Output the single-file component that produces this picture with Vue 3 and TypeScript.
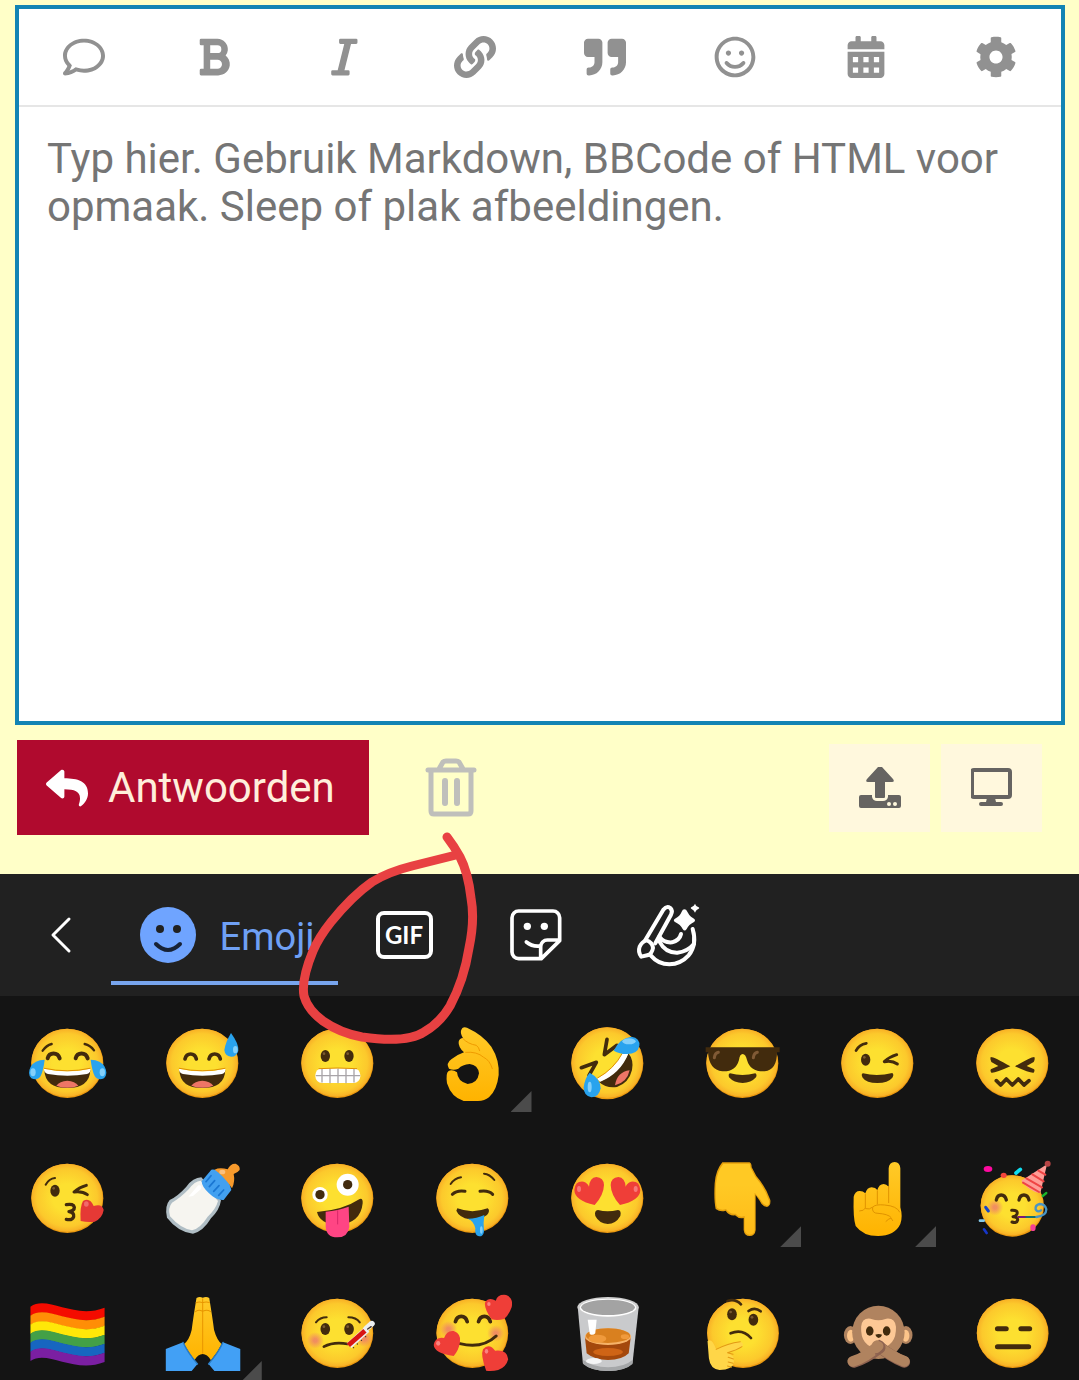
<script setup lang="ts">
import { ref } from 'vue'

interface Tool {
  label: string
  box: string
  path: string
}

interface Emoji {
  name: string
  box: string
  art: string
  variants?: boolean
}

const message = ref('')

const tools: Tool[] = [
  { label: 'Reactie', box: '0 0 512 512', path: 'M256 32C114.6 32 0 125.1 0 240c0 47.6 19.9 91.2 52.9 126.3C38 405.7 7 439.1 6.5 439.5c-6.6 7-8.4 17.2-4.6 26S14.4 480 24 480c61.5 0 110-25.7 139.1-46.3C192 442.8 223.2 448 256 448c141.4 0 256-93.1 256-208S397.4 32 256 32zm0 368c-26.7 0-53.1-4.1-78.4-12.1l-22.7-7.2-19.5 13.8c-14.3 10.1-33.9 21.4-57.5 29 7.3-12.1 14.4-25.7 19.9-40.2l10.6-28.1-20.6-21.8C69.7 314.1 48 282.2 48 240c0-88.2 93.3-160 208-160s208 71.8 208 160-93.3 160-208 160z' },
  { label: 'Vet', box: '-64 0 512 512', path: 'M333.49 238a122 122 0 0 0 27-65.21C367.87 96.49 308 32 233.42 32H34a16 16 0 0 0-16 16v48a16 16 0 0 0 16 16h31.87v288H34a16 16 0 0 0-16 16v48a16 16 0 0 0 16 16h209.32c70.8 0 134.14-51.75 141-122.4 4.74-48.45-16.39-92.06-50.83-119.6zM145.66 112h87.76a48 48 0 0 1 0 96h-87.76zm87.76 288h-87.76V288h87.76a56 56 0 0 1 0 112z' },
  { label: 'Cursief', box: '-88 0 512 512', path: 'M320 48v32a16 16 0 0 1-16 16h-62.76l-80 320H208a16 16 0 0 1 16 16v32a16 16 0 0 1-16 16H16a16 16 0 0 1-16-16v-32a16 16 0 0 1 16-16h62.76l80-320H112a16 16 0 0 1-16-16V48a16 16 0 0 1 16-16h192a16 16 0 0 1 16 16z' },
  { label: 'Link', box: '0 0 512 512', path: 'M326.612 185.391c59.747 59.809 58.927 155.698.36 214.59-.11.12-.24.25-.36.37l-67.2 67.2c-59.27 59.27-155.699 59.262-214.96 0-59.27-59.26-59.27-155.7 0-214.96l37.106-37.106c9.84-9.84 26.786-3.3 27.294 10.606.648 17.722 3.826 35.527 9.69 52.721 1.986 5.822.567 12.262-3.783 16.612l-13.087 13.087c-28.026 28.026-28.905 73.66-1.155 101.96 28.024 28.579 74.086 28.749 102.325.51l67.2-67.19c28.191-28.191 28.073-73.757 0-101.83-3.701-3.694-7.429-6.564-10.341-8.569a16.037 16.037 0 0 1-6.947-12.606c-.396-10.567 3.348-21.456 11.698-29.806l21.054-21.055c5.521-5.521 14.182-6.199 20.584-1.731a152.482 152.482 0 0 1 20.522 17.197zM467.547 44.449c-59.261-59.262-155.69-59.27-214.96 0l-67.2 67.2c-.12.12-.25.25-.36.37-58.566 58.892-59.387 154.781.36 214.59a152.454 152.454 0 0 0 20.521 17.196c6.402 4.468 15.064 3.789 20.584-1.731l21.054-21.055c8.35-8.35 12.094-19.239 11.698-29.806a16.037 16.037 0 0 0-6.947-12.606c-2.912-2.005-6.64-4.875-10.341-8.569-28.073-28.073-28.191-73.639 0-101.83l67.2-67.19c28.239-28.239 74.3-28.069 102.325.51 27.75 28.3 26.872 73.934-1.155 101.96l-13.087 13.087c-4.35 4.35-5.769 10.79-3.783 16.612 5.864 17.194 9.042 34.999 9.69 52.721.509 13.906 17.454 20.446 27.294 10.606l37.106-37.106c59.271-59.259 59.271-155.699.001-214.959z' },
  { label: 'Citaat', box: '0 0 512 512', path: 'M464 32H336c-26.5 0-48 21.5-48 48v128c0 26.5 21.5 48 48 48h80v64c0 35.3-28.7 64-64 64h-8c-13.3 0-24 10.7-24 24v48c0 13.3 10.7 24 24 24h8c88.4 0 160-71.6 160-160V80c0-26.5-21.5-48-48-48zm-288 0H48C21.5 32 0 53.5 0 80v128c0 26.5 21.5 48 48 48h80v64c0 35.3-28.7 64-64 64h-8c-13.3 0-24 10.7-24 24v48c0 13.3 10.7 24 24 24h8c88.4 0 160-71.6 160-160V80c0-26.5-21.5-48-48-48z' },
  { label: 'Smiley', box: '-8 0 512 512', path: 'M248 8C111 8 0 119 0 256s111 248 248 248 248-111 248-248S385 8 248 8zm0 448c-110.3 0-200-89.7-200-200S137.7 56 248 56s200 89.7 200 200-89.7 200-200 200zm-80-216c17.7 0 32-14.3 32-32s-14.3-32-32-32-32 14.3-32 32 14.3 32 32 32zm160 0c17.7 0 32-14.3 32-32s-14.3-32-32-32-32 14.3-32 32 14.3 32 32 32zm4 72.6c-20.8 25-51.5 39.4-84 39.4s-63.2-14.3-84-39.4c-8.5-10.2-23.7-11.5-33.8-3.1-10.2 8.5-11.5 23.6-3.1 33.8 30 36 74.1 56.6 120.9 56.6s90.9-20.6 120.9-56.6c8.5-10.2 7.1-25.3-3.1-33.8-10.1-8.4-25.3-7.1-33.8 3.1z' },
  { label: 'Datum', box: '-32 0 512 512', path: 'M0 464c0 26.5 21.5 48 48 48h352c26.5 0 48-21.5 48-48V192H0zM64 256h64v64H64zm128 0h64v64h-64zm128 0h64v64h-64zM64 384h64v64H64zm128 0h64v64h-64zm128 0h64v64h-64zM400 64h-48V16c0-8.8-7.2-16-16-16h-32c-8.8 0-16 7.2-16 16v48H160V16c0-8.8-7.2-16-16-16h-32c-8.8 0-16 7.2-16 16v48H48C21.5 64 0 85.5 0 112v48h448v-48c0-26.5-21.5-48-48-48z' },
  { label: 'Instellingen', box: '0 0 512 512', path: 'M487.4 315.7l-42.6-24.6c4.3-23.2 4.3-47 0-70.2l42.6-24.6c4.9-2.8 7.1-8.6 5.5-14-11.1-35.6-30-67.8-54.7-94.6-3.8-4.1-10-5.1-14.8-2.3L380.8 110c-17.9-15.4-38.5-27.3-60.8-35.1V25.8c0-5.6-3.9-10.5-9.4-11.7-36.7-8.2-74.3-7.8-109.2 0-5.5 1.2-9.4 6.1-9.4 11.7V75c-22.2 7.9-42.8 19.8-60.8 35.1L88.7 85.5c-4.9-2.8-11-1.9-14.8 2.3-24.7 26.7-43.6 58.9-54.7 94.6-1.7 5.4.6 11.2 5.5 14L67.3 221c-4.3 23.2-4.3 47 0 70.2l-42.6 24.6c-4.9 2.8-7.1 8.6-5.5 14 11.1 35.6 30 67.8 54.7 94.6 3.8 4.1 10 5.1 14.8 2.3l42.6-24.6c17.9 15.4 38.5 27.3 60.8 35.1v49.2c0 5.6 3.9 10.5 9.4 11.7 36.7 8.2 74.3 7.8 109.2 0 5.5-1.2 9.4-6.1 9.4-11.7v-49.2c22.2-7.9 42.8-19.8 60.8-35.1l42.6 24.6c4.9 2.8 11 1.9 14.8-2.3 24.7-26.7 43.6-58.9 54.7-94.6 1.5-5.5-.7-11.3-5.6-14.1zM256 336c-44.1 0-80-35.9-80-80s35.9-80 80-80 80 35.9 80 80-35.9 80-80 80z' },
]

const INK = '#422b0d'
const WATER = '#29a3ee'
const SHINE = '#83d0fb'
const EDGE = '#e08f00'
const HEART = '#ef3e38'

const fill = (d: string, color = INK) => `<path d="${d}" fill="${color}"/>`
const line = (d: string, width: number, color = INK) =>
  `<path d="${d}" fill="none" stroke="${color}" stroke-width="${width}" stroke-linecap="round" stroke-linejoin="round"/>`
const oval = (cx: number, cy: number, rx: number, ry: number, color = INK) =>
  `<ellipse cx="${cx}" cy="${cy}" rx="${rx}" ry="${ry}" fill="${color}"/>`
const head = (cx: number, cy: number, rx = 108, ry = 104) =>
  oval(cx, cy, rx, ry, '#eb9a10') + oval(cx - 1, cy - 2, rx - 1, ry - 2, 'url(#skin-face)')
const eye = (cx: number, cy: number) => oval(cx, cy, 14, 18) + oval(cx - 4, cy - 7, 4, 4, '#7a5a30')
const blush = (cx: number, cy: number) => oval(cx, cy, 25, 25, 'url(#blush)')
const shift = (dx: number, art: string) => `<g transform="translate(${dx} 0)">${art}</g>`
const mirror = (axis: number, art: string) => `<g transform="translate(${axis * 2} 0) scale(-1 1)">${art}</g>`

const laugh =
  fill('M134 180Q203 196 272 180Q270 234 203 234Q136 234 134 180') +
  fill('M170 227Q180 213 203 212Q226 213 236 227Q203 240 170 227', '#ee7566') +
  fill('M133 176Q203 192 272 176Q274 187 262 192Q203 202 145 192Q132 187 133 176', '#fff') +
  line('M134 175Q203 190 271 175', 3, EDGE)
const sideTear = fill('M135 149Q104 150 93 170Q82 192 95 205Q113 213 123 198Q131 182 135 149', WATER) + oval(100, 187, 8, 12, SHINE)
const loveEye = fill('M165 585Q105 572 104 540Q106 512 132 515Q144 519 148 530Q150 503 170 501Q192 503 193 525Q192 556 165 585', HEART) + oval(118, 537, 6, 9, '#f87878')
const sleeve = fill('M482 207L532 187Q545 218 574 252L557 273H482Z', '#42a0f5') + line('M532 187Q545 218 574 252', 4, '#2a7cc4')

const stripes = ['#f40b00', '#ff8e06', '#ffe708', '#43a047', '#1766c0', '#7b1fa2']
const flag = stripes
  .map((color, i) => {
    const y = 79 + i * 27
    return fill(`M90 ${y}C140 ${y - 36} 215 ${y + 40} 305 ${y + 3}V${y + 31}C215 ${y + 68} 140 ${y - 8} 90 ${y + 28}Z`, color)
  })
  .join('')

const emojis: Emoji[] = [
  {
    name: 'Tranen van het lachen',
    box: '82 42 240 240',
    art: head(203, 160) + line('M129 122Q140 106 156 102', 7) + line('M255 102Q272 106 283 121', 7) +
      line('M144 145C149 126 174 126 180 145', 12) + line('M228 145C233 126 258 126 264 145', 12) +
      laugh + sideTear + mirror(204, sideTear),
  },
  {
    name: 'Lachen met zweetdruppel',
    box: '487 42 240 240',
    art: head(608, 160) + line('M556 147C561 127 585 127 590 147', 11) + line('M628 147C633 127 657 127 662 147', 11) +
      shift(405, laugh) + fill('M694 69Q718 102 716 122Q710 141 694 140Q676 138 674 120Q677 98 694 69', WATER) + oval(707, 119, 7, 11, SHINE),
  },
  {
    name: 'Grimas',
    box: '82 42 240 240',
    art: head(203, 160) + eye(167, 138) + eye(238, 138) +
      '<rect x="137" y="175" width="135" height="44" rx="20" fill="#fff"/>' +
      line('M140 197H270M157 178V216M181 177V218M205 177V218M229 177V218M253 178V216', 4, '#a8a4a8') +
      line('M148 176Q203 172 261 176', 3, EDGE),
  },
  {
    name: 'OK-gebaar',
    box: '487 42 240 240',
    variants: true,
    art: fill('M574 62Q578 48 592 53Q640 75 665 110Q690 150 687 195Q682 240 658 262Q645 273 625 273H582Q545 262 532 220Q528 190 536 184Q547 177 562 187Q564 215 594 222Q624 220 628 190Q625 165 600 162Q578 164 566 176Q552 182 538 176Q528 160 545 148Q560 135 583 127Q565 110 567 95Q570 84 580 84Q572 70 574 62Z', 'url(#skin-hand)') +
      line('M580 86Q595 102 620 106Q628 112 630 122M588 127Q622 124 642 142Q660 150 668 176', 3, '#f09b00'),
  },
  {
    name: 'Rollend van het lachen',
    box: '82 42 240 240',
    art: head(203, 160, 108, 108) +
      fill('M266 130Q283 150 277 180Q268 218 232 231Q200 236 178 216Q240 190 266 130') +
      fill('M270 181Q232 186 226 226Q262 218 270 181', '#ee7566') +
      fill('M250 127L266 131Q242 190 182 215L172 206Q226 176 250 127', '#fff') + line('M248 130Q222 178 174 204', 3, EDGE) +
      line('M202 88L194 134L232 106', 11) + line('M125 173L170 157L148 196', 11) +
      fill('M222 122Q240 84 275 80Q302 84 299 108Q294 132 262 132Q240 132 222 122', WATER) + oval(268, 94, 20, 9, SHINE) +
      fill('M150 188Q182 205 183 235Q178 262 155 262Q132 258 132 232Q135 205 150 188', WATER) + oval(150, 231, 6, 16, SHINE),
  },
  {
    name: 'Zonnebril',
    box: '487 42 240 240',
    art: head(608, 160) +
      fill('M498 112H720V127H712Q712 180 675 184Q632 186 622 150Q618 132 609 132Q600 132 598 150Q588 186 548 184Q508 180 505 127H498Z') +
      line('M524 143Q526 129 536 127', 9, '#805a35') + line('M641 143Q643 129 653 127', 9, '#805a35') +
      fill('M571 190Q608 200 647 190Q653 194 649 202Q634 219 609 219Q583 219 568 202Q565 192 571 190'),
  },
  {
    name: 'Knipoog',
    box: '82 42 240 240',
    art: head(203, 160) + line('M139 122Q148 104 170 100', 8) + eye(168, 149) +
      line('M261 134Q240 140 224 155Q247 150 263 162', 9) +
      fill('M160 190Q203 200 248 189Q254 194 248 203Q235 219 203 219Q170 219 159 203Q153 192 160 190'),
  },
  {
    name: 'Verward',
    box: '487 42 240 240',
    art: head(608, 160) + fill('M543 141Q552 140 602 169Q556 190 545 188Q540 180 545 177L566 168L545 156Q540 148 543 141') +
      fill('M674 141Q665 140 616 169Q661 190 672 188Q677 180 672 177L651 168L672 156Q677 148 674 141') +
      line('M560 212L573 225L590 207L608 225L626 207L643 225L658 212', 11),
  },
  {
    name: 'Kushandje',
    box: '82 447 240 240',
    art: head(203, 565) + line('M138 524Q148 506 166 504', 6) + eye(166, 542) +
      line('M260 526Q238 532 223 546Q247 542 263 554', 9) +
      line('M200 584Q222 580 224 592Q224 603 208 605Q224 607 222 620Q218 632 200 628', 10) +
      fill('M243 633Q240 590 250 573Q270 560 282 588Q308 580 312 600Q308 625 285 635Q265 638 243 633', '#e53935') + oval(260, 582, 7, 8, '#f06b6b'),
  },
  {
    name: 'Zuigfles',
    box: '487 447 240 240',
    art: fill('M605 502L664 571Q660 600 634 625Q610 665 580 671Q535 666 502 623Q494 588 510 570Q535 558 560 530Q580 503 605 502', '#b0bec5') +
      fill('M603 512L655 573Q649 597 624 620Q602 655 577 661Q543 656 511 619Q504 593 517 578Q542 564 567 538Q585 513 603 512', '#f6f5f0') +
      fill('M566 560L596 526Q608 524 604 537L580 558Z', '#fff') +
      fill('M606 514L635 479Q650 476 668 494Q692 518 695 540L672 570Q650 572 628 550Q606 530 606 514', '#42a0f0') +
      line('M619 515L634 497M629 530L645 512M642 544L658 527M657 556L672 540', 5, '#1976d2') +
      fill('M645 479Q660 471 684 478Q692 460 708 461Q722 467 720 480Q714 488 702 492Q707 515 697 535Q672 497 645 479', '#f79a2c') +
      oval(668, 486, 9, 7, '#fdc07c'),
  },
  {
    name: 'Gek gezicht',
    box: '82 447 240 240',
    art: head(203, 565) + oval(151, 554, 23, 23, '#fff') + oval(151, 554, 14, 14) + oval(234, 524, 33, 33, '#fff') + oval(234, 524, 14, 14) +
      fill('M142 606Q220 600 270 567Q280 563 279 580Q273 640 205 645Q150 642 142 606') +
      fill('M168 605Q205 602 237 590L239 650Q235 682 203 682Q170 682 168 650Z', '#ff4584') + line('M204 602V642', 3, '#d82668'),
  },
  {
    name: 'Kwijlend gezicht',
    box: '487 447 240 240',
    art: head(608, 565) + line('M543 522Q555 505 574 502', 6) + line('M643 491Q660 492 674 510', 6) +
      line('M548 553Q562 540 586 544', 9) + line('M631 544Q656 540 669 553', 9) +
      fill('M563 595Q608 612 654 595Q663 602 652 615Q630 630 600 628Q568 622 560 602Z') +
      fill('M594 626Q622 626 644 615Q640 640 643 665Q640 680 628 679Q614 676 617 655Q612 632 594 626', WATER) + oval(635, 660, 4, 11, SHINE),
  },
  {
    name: 'Hartjesogen',
    box: '82 447 240 240',
    art: head(203, 565) + loveEye + mirror(203, loveEye) +
      fill('M175 600Q203 608 235 600Q246 602 242 618Q228 642 204 642Q178 640 167 618Q163 601 175 600'),
  },
  {
    name: 'Wijst omlaag',
    box: '487 447 240 240',
    variants: true,
    art: fill('M548 457H630Q636 460 636 472L650 498Q678 530 692 570Q694 588 682 591Q668 590 660 572L648 555V660Q646 678 630 678Q614 678 612 660V624Q598 628 586 616Q568 618 558 602Q543 608 528 597Q522 570 525 520Q528 480 548 457', '#e5a00c') +
      fill('M551 461H630L633 474L647 501Q676 535 688 572Q690 585 682 587Q670 584 663 570L645 548V660Q643 674 630 674Q617 674 615 658V618Q598 624 588 611Q570 613 559 597Q545 602 532 594Q526 570 529 521Q532 484 551 461', 'url(#skin-point)'),
  },
  {
    name: 'Wijst omhoog',
    box: '82 447 240 240',
    variants: true,
    art: fill('M237 530V475Q238 457 255 456Q271 457 272 475V592Q280 620 272 642Q255 678 205 678Q160 678 138 648Q130 625 132 560Q136 543 150 543Q160 543 167 550Q172 532 186 532Q198 533 203 540Q208 522 222 522Q230 523 237 530Z', 'url(#skin-hand)') +
      line('M167 552V594Q163 603 150 603M203 542V582M237 530V578M168 596Q180 600 188 592M270 606Q262 588 225 585Q196 582 189 592Q186 610 205 610Q235 612 244 622M229 634Q236 627 244 624L249 632', 3, '#e09300'),
  },
  {
    name: 'Feestgezicht',
    box: '487 447 240 240',
    art: head(608, 588, 95, 92) + blush(556, 592) + line('M560 570C564 550 585 550 590 570', 10) + line('M628 570C632 550 653 550 658 570', 10) +
      line('M606 601Q626 600 622 612Q619 619 610 620Q625 621 624 630Q621 641 607 636', 9) +
      line('M626 621H650', 6, '#7b1a78') + line('M650 621H680', 6, '#18706f') +
      line('M680 621Q710 618 710 598Q706 582 690 582Q676 585 678 598Q684 608 694 601', 7, '#4995c5') +
      fill('M635 512L712 463L692 550Q660 545 635 512', '#ff9c96') +
      line('M650 505L697 532M668 493L702 514M686 482L707 494M640 518L688 546', 6, '#ef4444') + oval(714, 461, 9, 9, '#b54444') +
      oval(535, 477, 13, 9, '#ff0aa0') + oval(582, 496, 9, 8, '#f4453c') + line('M619 489L632 478', 11, '#10dff2') +
      line('M528 592L536 603', 9, '#1644c8') + line('M511 632H522', 8, '#86c9e8') + line('M523 658L531 669', 8, '#1636c8') +
      line('M699 558L710 549', 7, '#19b52b') + oval(670, 653, 8, 10, '#f43f94'),
  },
  { name: 'Regenboogvlag', box: '80 41 232 240', art: flag },
  {
    name: 'Gevouwen handen',
    box: '471 42 232 240',
    variants: true,
    art: fill('M571 54Q580 48 589 53Q600 48 608 54Q617 110 622 150Q630 180 644 192Q632 218 613 241Q602 222 589 222Q576 222 565 241Q549 218 535 192Q550 180 557 150Q562 110 571 54', 'url(#skin-hand)') +
      line('M589 56V220M570 68Q580 64 588 68Q600 64 609 68M568 95Q578 88 587 93M591 93Q602 88 612 95', 3, '#e89600') +
      sleeve + mirror(590, sleeve),
  },
  {
    name: 'Thermometer in mond',
    box: '863 42 232 240',
    art: head(980, 160, 104) + blush(916, 181) + blush(1058, 176) + eye(945, 147) + eye(1014, 147) +
      line('M918 127Q930 112 949 112', 6) + line('M1012 112Q1034 112 1045 127', 6) + line('M941 200Q970 184 1010 192', 8) +
      line('M1064 146L1080 131', 17, '#eceff1') +
      '<path d="M1014 197L1066 148" fill="none" stroke="#eceff1" stroke-width="20"/><path d="M1012 196L1060 152" fill="none" stroke="#d81414" stroke-width="14"/>' +
      line('M1027 203V203M1038 192V192M1050 181V181M1062 170V170M1068 147L1078 140', 4, '#40302c'),
  },
  {
    name: 'Verliefd met hartjes',
    box: '1255 42 232 240',
    art: head(1372, 160, 104) + blush(1303, 148) + blush(1440, 160) + line('M1323 125C1328 104 1352 104 1357 125', 11) +
      line('M1390 125C1395 104 1419 104 1424 125', 11) + line('M1336 191Q1400 208 1441 168', 9) +
      fill('M1428 118Q1405 85 1409 67Q1420 50 1440 62Q1445 42 1470 45Q1492 54 1486 82Q1478 105 1464 117Q1445 122 1428 118', HEART) +
      fill('M1318 228Q1262 220 1260 195Q1264 170 1290 174Q1298 150 1318 153Q1341 162 1336 187Q1333 210 1318 228', HEART) +
      fill('M1412 272Q1395 225 1403 208Q1420 188 1438 212Q1474 208 1476 238Q1470 262 1447 270Q1430 274 1412 272', HEART) +
      oval(1420, 72, 5, 6, '#fa8480') + oval(1273, 190, 6, 7, '#fa8480') + oval(1413, 214, 5, 7, '#fa8480'),
  },
  {
    name: 'Whiskyglas',
    box: '80 42 232 240',
    art: fill('M111 80L126 250Q150 273 199 273Q248 273 270 250L288 80Z', '#c9cacc') + fill('M127 240Q155 262 199 262Q245 262 270 240V252Q248 273 199 273Q150 273 127 252Z', '#a5a7a9') +
      oval(199, 81, 89, 30, '#cfcfcf') + oval(199, 83, 82, 27, '#fff') + oval(199, 82, 78, 23, '#a3a3a3') +
      fill('M132 170L137 220Q160 240 199 240Q240 240 259 220L265 170Z', '#a4480c') + oval(199, 216, 43, 12, '#cf6416') +
      oval(199, 170, 67, 25, '#f6b268') + oval(199, 167, 64, 22, '#d9801f') + oval(168, 176, 26, 12, '#f09a3c') + oval(248, 170, 12, 7, '#f09a3c') +
      fill('M140 119H166L162 160Q155 168 146 162Z', '#fff') + oval(158, 243, 23, 9, '#f4f5f6'),
  },
  {
    name: 'Nadenkend',
    box: '471 42 232 240',
    art: head(590, 160, 104) + line('M545 63Q567 55 584 73', 8) + line('M606 93Q624 80 641 94', 8) + eye(558, 103) + eye(620, 119) +
      line('M554 160Q588 145 613 174', 8) +
      fill('M487 183Q500 173 512 208Q545 190 582 185Q595 190 587 200Q572 210 545 218Q567 226 563 248Q560 268 522 270Q495 268 491 235Z', '#ffd648') +
      line('M512 208Q545 190 582 185M587 200Q572 210 545 218M545 218L561 223M547 232L562 237M547 246L561 250M545 258L556 262', 3, '#e39a14'),
  },
  {
    name: 'Aapje zwijgt',
    box: '863 42 232 240',
    art: oval(902, 165, 19, 27, '#b0835f') + oval(1063, 165, 19, 27, '#b0835f') + oval(903, 167, 11, 18, '#fdc58a') + oval(1062, 167, 11, 18, '#fdc58a') +
      oval(983, 157, 76, 80, '#b0835f') + fill('M933 140Q935 113 960 116Q975 121 983 121Q992 121 1006 116Q1031 113 1034 140Q1036 200 983 205Q930 200 933 140', '#fdc895') +
      oval(958, 153, 11, 14) + oval(1007, 153, 11, 14) + fill('M974 164Q984 160 994 164Q990 174 984 174Q978 174 974 164') +
      line('M1058 246Q1020 230 985 200', 34, '#8d6250') + line('M1058 244Q1022 230 980 197', 32, '#b0835f') +
      line('M912 246Q945 236 986 204', 34, '#8d6250') + line('M909 244Q945 234 982 198', 32, '#b0835f') +
      line('M985 181Q1004 188 1001 206Q996 218 975 222', 4, '#8d6250'),
  },
  {
    name: 'Uitdrukkingsloos',
    box: '1257 42 232 240',
    art: head(1375, 160, 104) + line('M1331 146H1356', 15) + line('M1399 146H1424', 15) + line('M1331 200H1421', 15),
  },
]
</script>

<template>
  <main class="screen">
    <form class="reply" @submit.prevent>
      <div class="composer">
        <div class="tools" role="toolbar" aria-label="Opmaak">
          <button v-for="tool in tools" :key="tool.label" type="button" class="tool" :aria-label="tool.label">
            <svg class="glyph" :viewBox="tool.box"><path :d="tool.path" fill="currentColor" fill-rule="evenodd" /></svg>
          </button>
        </div>
        <textarea
          v-model="message"
          class="message"
          aria-label="Bericht"
          placeholder="Typ hier. Gebruik Markdown, BBCode of HTML voor opmaak. Sleep of plak afbeeldingen."
        ></textarea>
      </div>

      <div class="actions">
        <button type="submit" class="submit">
          <svg class="glyph" viewBox="0 0 512 512">
            <path fill="#fff" d="M8.309 189.836L184.313 37.851C199.719 24.546 224 35.347 224 56.015v80.053c160.629 1.839 288 34.032 288 186.258 0 61.441-39.581 122.309-83.333 154.132-13.653 9.931-33.111-2.533-28.077-18.631 45.344-145.012-21.507-183.51-176.59-185.742V360c0 20.7-24.3 31.453-39.687 18.164l-176.004-152c-11.071-9.562-11.086-26.753 0-36.328z" />
          </svg>
          <span>Antwoorden</span>
        </button>
        <button type="button" class="trash" aria-label="Verwijderen">
          <svg viewBox="0 0 52 60" fill="none" stroke="currentColor" stroke-width="5" stroke-linecap="round" stroke-linejoin="round">
            <path d="M3 12H49M6 13V53Q6 56 9 56H43Q46 56 46 53V13M14 11L18 4Q19 3 21 3H31Q33 3 34 4L38 11" />
            <path d="M20 23V45M32 23V45" stroke-width="6" />
          </svg>
        </button>
        <div class="extras">
          <button type="button" class="extra" aria-label="Uploaden">
            <svg class="glyph" viewBox="0 1 42 42">
              <path fill="currentColor" d="M21 0Q22 0 23 1L34 13Q36 16 33 16H26V31Q26 32 25 32H17Q16 32 16 31V16H9Q6 16 8 13L19 1Q20 0 21 0ZM2 29H13V31Q14 35 18 35H24Q28 35 29 31V29H40Q42 29 42 31V40Q42 42 40 42H2Q0 42 0 40V31Q0 29 2 29Z" />
              <circle cx="30" cy="38" r="2" fill="#fff8dd" /><circle cx="36" cy="38" r="2" fill="#fff8dd" />
            </svg>
          </button>
          <button type="button" class="extra" aria-label="Voorbeeld">
            <svg class="glyph" viewBox="1 1 42 42">
              <rect x="2" y="4" width="38" height="27" rx="2" fill="none" stroke="currentColor" stroke-width="4" />
              <path fill="currentColor" d="M17 32H25L26 36H31Q33 36 33 38T31 40H11Q9 40 9 38T11 36H16Z" />
            </svg>
          </button>
        </div>
      </div>
    </form>

    <section class="keyboard" aria-label="Emojitoetsenbord">
      <nav class="tabs">
        <button type="button" class="back" aria-label="Terug">
          <svg viewBox="0 0 24 40"><path d="M20 4L4 20L20 36" fill="none" stroke="#fff" stroke-width="3" stroke-linecap="round" stroke-linejoin="round" /></svg>
        </button>
        <button type="button" class="tab active">
          <svg class="smile" viewBox="0 0 56 56">
            <circle cx="28" cy="28" r="28" fill="#6fa4ff" />
            <circle cx="20" cy="22" r="4" fill="#212121" /><circle cx="37" cy="22" r="4" fill="#212121" />
            <path d="M16 37Q28 49 40 37" fill="none" stroke="#172236" stroke-width="4" stroke-linecap="round" />
          </svg>
          <span class="caption">Emoji</span>
        </button>
        <button type="button" class="tab" aria-label="GIF"><span class="gif">GIF</span></button>
        <button type="button" class="tab" aria-label="Stickers">
          <svg class="sticker" viewBox="84 81 168 168" fill="none" stroke="#fff" stroke-width="11" stroke-linejoin="round" stroke-linecap="round">
            <path d="M184 236H116A20 20 0 0 1 96 216V113A20 20 0 0 1 116 93H219A20 20 0 0 1 239 113V182ZM182 234V200A20 20 0 0 1 202 180H237M139 186Q156 200 178 198" />
            <circle cx="142" cy="139" r="11" fill="#fff" stroke="none" /><circle cx="193" cy="139" r="11" fill="#fff" stroke="none" />
          </svg>
        </button>
        <button type="button" class="tab" aria-label="Creatief">
          <svg class="creative" viewBox="462 63 204 204" fill="none" stroke="#fff" stroke-width="12" stroke-linejoin="round" stroke-linecap="round">
            <path d="M496 180L550 89Q560 76 571 84Q579 92 573 104L526 190" />
            <path d="M484 230Q473 216 479 200Q486 185 499 181Q517 186 519 204Q516 220 505 225Z" />
            <path d="M512 226Q535 253 568 253Q602 252 626 226Q652 193 638 147" />
            <path d="M538 184Q556 219 592 218Q622 215 642 192M538 170Q552 189 576 187Q599 181 603 162" />
            <path stroke="none" fill="#fff" d="M613 88Q619 88 622 95Q627 105 633 110L642 116Q648 121 642 126Q626 134 620 147Q614 156 608 147Q602 134 585 126Q578 121 585 116Q600 108 605 95Q608 88 613 88ZM645 71Q648 78 650 79Q658 83 658 84Q658 86 650 90Q648 92 645 98Q641 91 639 90Q632 86 632 84Q632 83 639 79Q642 77 645 71Z" />
          </svg>
        </button>
      </nav>

      <div class="emojis">
        <svg class="paints" aria-hidden="true">
          <defs>
            <radialGradient id="skin-face">
              <stop offset="0.4" stop-color="#fde030" />
              <stop offset="0.85" stop-color="#fcc92c" />
              <stop offset="1" stop-color="#f8b026" />
            </radialGradient>
            <radialGradient id="blush">
              <stop offset="0.2" stop-color="#ed7770" stop-opacity="0.75" />
              <stop offset="1" stop-color="#ed7770" stop-opacity="0" />
            </radialGradient>
            <linearGradient id="skin-hand" x2="0" y2="1">
              <stop offset="0" stop-color="#ffca28" />
              <stop offset="1" stop-color="#ffb300" />
            </linearGradient>
            <linearGradient id="skin-point" x2="0" y2="1">
              <stop offset="0.3" stop-color="#ffc924" />
              <stop offset="1" stop-color="#ffbb18" />
            </linearGradient>
          </defs>
        </svg>
        <button v-for="emoji in emojis" :key="emoji.name" type="button" class="emoji" :aria-label="emoji.name">
          <svg class="art" :viewBox="emoji.box" preserveAspectRatio="none" v-html="emoji.art"></svg>
          <i v-if="emoji.variants" class="more"></i>
        </button>
      </div>

      <svg class="scribble" viewBox="290 824 200 230" aria-hidden="true">
        <path d="M447 837Q454 846 460 857Q468 872 471 898Q475 920 469 948Q464 980 450 1006Q440 1023 424 1032C412 1040 390 1041 362 1037Q340 1033 323 1021Q308 1010 304 996Q301 980 313 951Q319 937 331 922Q352 896 372 882Q388 872 412 866L456 855" />
      </svg>
    </section>
  </main>
</template>

<style>
body {
  margin: 0;
}
</style>

<style scoped>
.screen {
  display: flex;
  flex-direction: column;
  height: 100vh;
  overflow: hidden;
  background: #ffffc8;
  font-family: Roboto, "Liberation Sans", sans-serif;
}

button {
  margin: 0;
  padding: 0;
  border: 0;
  background: none;
  font: inherit;
  color: inherit;
}

svg {
  display: block;
}

.glyph {
  width: 42px;
  height: 42px;
}

.reply {
  flex: 1;
  min-height: 0;
  display: flex;
  flex-direction: column;
  padding-top: 5px;
}

.composer {
  flex: 1;
  display: flex;
  flex-direction: column;
  margin: 0 14px 0 15px;
  border: 4px solid #1284b4;
  background: #fff;
}

.tools {
  display: flex;
  height: 96px;
  border-bottom: 2px solid #e6e6e6;
}

.tool {
  flex: 1;
  display: flex;
  align-items: center;
  justify-content: center;
  color: #919191;
}

.message {
  flex: 1;
  padding: 28px;
  border: 0;
  outline: 0;
  resize: none;
  background: transparent;
  color: #333;
  font: 42px/48px Roboto, "Liberation Sans", sans-serif;
}

.message::placeholder {
  color: #757575;
  opacity: 1;
}

.actions {
  display: flex;
  align-items: center;
  padding: 15px 37px 39px 17px;
}

.submit {
  display: flex;
  align-items: center;
  gap: 20px;
  height: 95px;
  padding: 0 34px 0 29px;
  background: #b00a2e;
  color: #ffeedb;
  font-size: 42px;
}

.trash {
  width: 52px;
  height: 60px;
  margin-left: 56px;
  color: #bfbfbb;
}

.extras {
  display: flex;
  gap: 11px;
  margin-left: auto;
}

.extra {
  display: flex;
  align-items: center;
  justify-content: center;
  width: 101px;
  height: 88px;
  background: #fff8dd;
  color: #666461;
}

.keyboard {
  position: relative;
  flex: none;
  background: #141414;
}

.tabs {
  display: flex;
  height: 122px;
  background: #212121;
  color: #fff;
}

.back {
  display: flex;
  align-items: center;
  justify-content: center;
  width: 111px;
  padding-left: 10px;
}

.back svg {
  width: 24px;
  height: 40px;
}

.tab {
  display: flex;
  align-items: center;
  justify-content: center;
  width: 132px;
}

.active {
  gap: 24px;
  box-sizing: border-box;
  width: 227px;
  height: 111px;
  padding: 15px 0 0 5px;
  border-bottom: 4px solid #78a5ee;
  color: #6fa0f5;
  font-size: 38px;
}

.caption {
  padding-top: 4px;
}

.smile {
  width: 56px;
  height: 56px;
}

.gif {
  display: flex;
  align-items: center;
  justify-content: center;
  box-sizing: border-box;
  width: 57px;
  height: 48px;
  border: 4px solid #fff;
  border-radius: 8px;
  font: 700 24px/40px Lato, sans-serif;
}

.sticker {
  width: 56px;
  height: 56px;
}

.creative {
  width: 68px;
  height: 68px;
}

.emojis {
  display: grid;
  grid-template-columns: repeat(8, 1fr);
  grid-auto-rows: 135px;
  height: 384px;
  overflow: hidden;
}

.paints {
  position: absolute;
  width: 0;
  height: 0;
}

.emoji {
  position: relative;
  display: flex;
  align-items: center;
  justify-content: center;
}

.art {
  width: 80px;
  height: 80px;
}

.more {
  position: absolute;
  right: 8px;
  bottom: 19px;
  width: 21px;
  height: 21px;
  background: #4b4b4b;
  clip-path: polygon(100% 0, 100% 100%, 0 100%);
}

.scribble {
  position: absolute;
  top: -50px;
  left: 290px;
  width: 200px;
  height: 230px;
  pointer-events: none;
  fill: none;
  stroke: #e84142;
  stroke-width: 9;
  stroke-linecap: round;
  stroke-linejoin: round;
}
</style>
